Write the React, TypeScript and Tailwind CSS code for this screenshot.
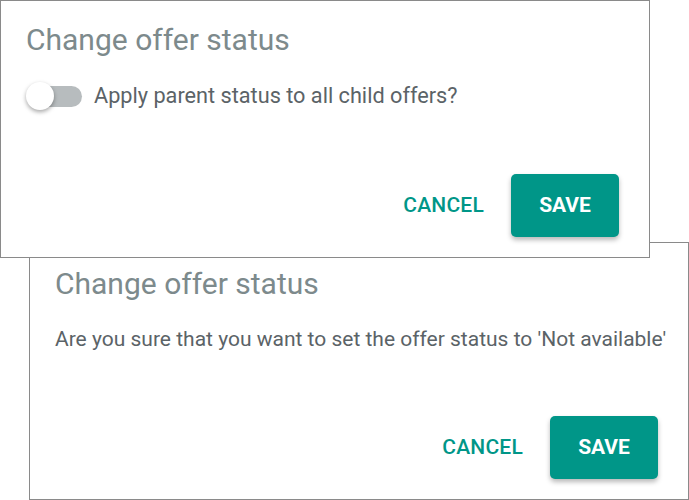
import type { ReactNode } from "react";

function DialogActions() {
  return (
    <div className="mt-auto flex items-center justify-end gap-[27px]">
      <button className="text-[21px] font-medium uppercase tracking-[0.01em] text-[#009688]">Cancel</button>
      <button className="h-[63px] w-[108px] rounded-[5px] bg-[#009688] text-[21px] font-bold uppercase text-white shadow-[0_3px_5px_rgba(0,0,0,0.28)]">
        Save
      </button>
    </div>
  );
}

function Dialog({ className, children }: { className: string; children: ReactNode }) {
  return (
    <section className={`flex h-[258px] flex-col border border-[#8a8a8a] bg-white pb-[20px] pl-[25px] pr-[30px] ${className}`}>
      <h2 className="text-[30px] leading-[32px] text-[#7d8a8c]">Change offer status</h2>
      {children}
      <DialogActions />
    </section>
  );
}

export default function App() {
  return (
    <div className="flex w-[689px] flex-col bg-white font-['Roboto',sans-serif]">
      <Dialog className="relative z-10 w-[650px] pt-[23px]">
        <div className="mt-[25px] flex h-[30px] items-center gap-[12px]">
          <span className="relative flex h-[30px] w-[56px] items-center">
            <span className="ml-[3px] h-[21px] w-[53px] rounded-full bg-[#b7bcbe]" />
            <span className="absolute left-0 top-[1px] h-[28px] w-[28px] rounded-full bg-white shadow-[0_2px_4px_rgba(0,0,0,0.35)]" />
          </span>
          <span className="text-[21.7px] text-[#5b6367]">Apply parent status to all child offers?</span>
        </div>
      </Dialog>
      <Dialog className="ml-[29px] mt-[-16px] w-[660px] pt-[25px]">
        <p className="mt-[24px] whitespace-nowrap text-[21px] text-[#5b6367]">Are you sure that you want to set the offer status to 'Not available'</p>
      </Dialog>
    </div>
  );
}
